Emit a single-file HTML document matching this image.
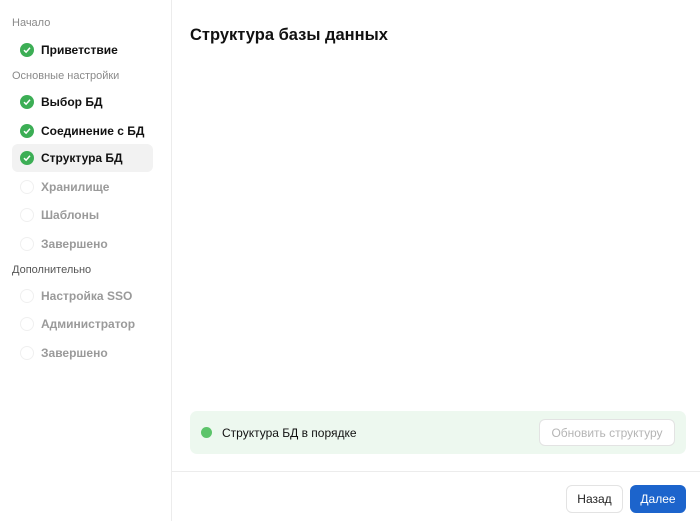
<!DOCTYPE html>
<html><head><meta charset="utf-8"><style>
*{box-sizing:border-box;margin:0;padding:0}
body{width:700px;height:521px;background:#fff;font-family:"Liberation Sans",sans-serif;position:relative;overflow:hidden;color:#111}
.side{position:absolute;left:0;top:0;width:172px;height:521px;border-right:1px solid #ececec}
.h{position:absolute;left:12px;font-size:11px;color:#8a8a8a}
.it{position:absolute;left:12px;width:141px;height:28px;display:flex;align-items:center;font-size:12px;font-weight:bold}
.it.act{background:#f2f2f2;border-radius:6px}
.ic{width:14px;height:14px;border-radius:50%;margin-left:8px;margin-right:7px;display:flex;align-items:center;justify-content:center}
.ok{background:#3cae55}
.no{border:1px solid #f0f0f0}
.it.dis{color:#9a9a9a}
h1{position:absolute;left:190px;top:26px;font-size:16.5px;font-weight:bold}
.st{position:absolute;left:190px;top:411px;width:496px;height:43px;background:#edf8ef;border-radius:7px}
.dot{position:absolute;left:11px;top:16px;width:11px;height:11px;border-radius:50%;background:#5cc46a}
.stt{position:absolute;left:32px;top:15px;font-size:12px}
.rb{position:absolute;left:349px;top:8px;width:136px;height:27px;border:1px solid #e3e3e3;border-radius:6px;background:#fff;color:#b5b5b5;font-size:12px;display:flex;align-items:center;justify-content:center}
.div{position:absolute;left:172px;top:471px;width:528px;height:1px;background:#ececec}
.b{position:absolute;top:485px;height:28px;border-radius:6px;font-size:12px;display:flex;align-items:center;justify-content:center}
</style></head><body>
<div class="side">
<div class="h" style="top:17px">Начало</div>
<div class="it" style="top:36px"><span class="ic ok"><svg width="8" height="8" viewBox="0 0 8 8"><path d="M1 4.2L3.1 6.2L7 1.8" stroke="#fff" stroke-width="1.5" fill="none"/></svg></span>Приветствие</div>
<div class="h" style="top:70px">Основные настройки</div>
<div class="it" style="top:88px"><span class="ic ok"><svg width="8" height="8" viewBox="0 0 8 8"><path d="M1 4.2L3.1 6.2L7 1.8" stroke="#fff" stroke-width="1.5" fill="none"/></svg></span>Выбор БД</div>
<div class="it" style="top:117px"><span class="ic ok"><svg width="8" height="8" viewBox="0 0 8 8"><path d="M1 4.2L3.1 6.2L7 1.8" stroke="#fff" stroke-width="1.5" fill="none"/></svg></span>Соединение с БД</div>
<div class="it act" style="top:144px"><span class="ic ok"><svg width="8" height="8" viewBox="0 0 8 8"><path d="M1 4.2L3.1 6.2L7 1.8" stroke="#fff" stroke-width="1.5" fill="none"/></svg></span>Структура БД</div>
<div class="it dis" style="top:173px"><span class="ic no"></span>Хранилище</div>
<div class="it dis" style="top:201px"><span class="ic no"></span>Шаблоны</div>
<div class="it dis" style="top:230px"><span class="ic no"></span>Завершено</div>
<div class="h" style="top:264px;color:#555">Дополнительно</div>
<div class="it dis" style="top:282px"><span class="ic no"></span>Настройка SSO</div>
<div class="it dis" style="top:310px"><span class="ic no"></span>Администратор</div>
<div class="it dis" style="top:339px"><span class="ic no"></span>Завершено</div>
</div>
<h1>Структура базы данных</h1>
<div class="st"><div class="dot"></div><div class="stt">Структура БД в порядке</div><div class="rb">Обновить структуру</div></div>
<div class="div"></div>
<div class="b" style="left:566px;width:57px;border:1px solid #e3e3e3;color:#222">Назад</div>
<div class="b" style="left:630px;width:56px;background:#1c64cc;color:#fff">Далее</div>
</body></html>
